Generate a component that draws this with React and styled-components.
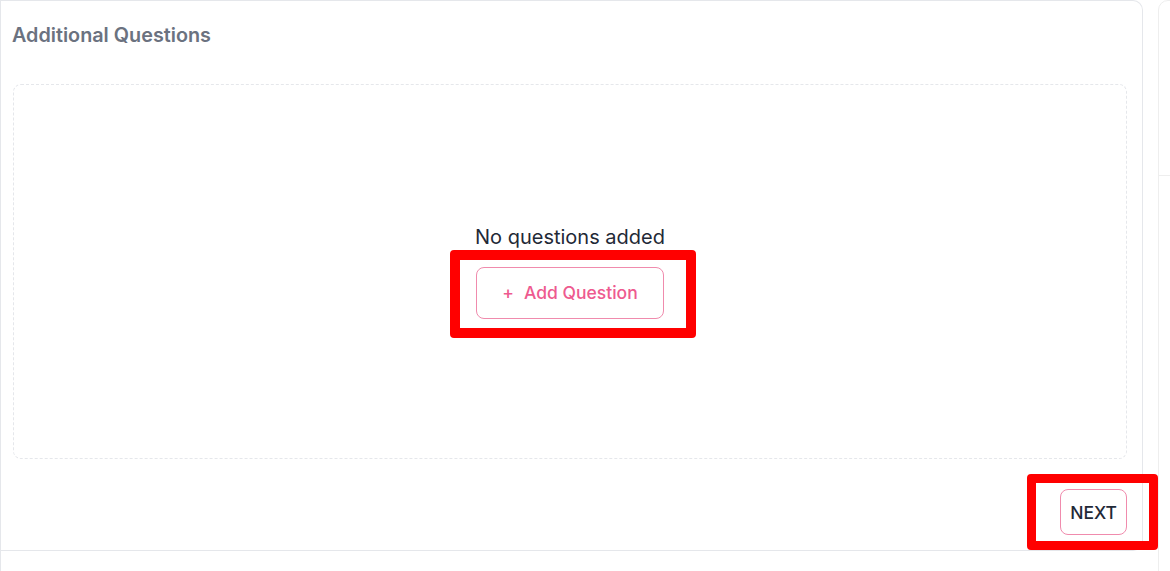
import React from "react";
import styled, { createGlobalStyle } from "styled-components";

const Global = createGlobalStyle`
  html, body { margin: 0; padding: 0; background: #ffffff; }
  body { font-family: Inter, "Noto Sans", "Liberation Sans", sans-serif; overflow: hidden; }
  * { box-sizing: border-box; }
`;

const Page = styled.div`
  display: flex;
  align-items: flex-start;
  gap: 15px;
  width: 1170px;
  height: 571px;
  overflow: hidden;
`;

const MainColumn = styled.div`
  flex: 0 0 1143px;
  height: 571px;
  border-left: 1px solid #e5e7eb;
`;

const Card = styled.section`
  display: flex;
  flex-direction: column;
  height: 551px;
  border: 1px solid #e5e7eb;
  border-left: none;
  border-radius: 0 10px 10px 0;
  padding: 22px 15px 15px 11px;
  background: #fff;
`;

const Title = styled.h2`
  margin: 0;
  font-size: 19.8px;
  line-height: 24px;
  font-weight: 600;
  color: #6b7280;
`;

const EmptyBox = styled.div`
  margin-top: 37px;
  margin-left: 1px;
  height: 375px;
  border: 1px dashed #e5e7eb;
  border-radius: 8px;
  display: flex;
  flex-direction: column;
  align-items: center;
  justify-content: center;
  gap: 18px;
`;

const EmptyText = styled.p`
  margin: 0;
  font-size: 20px;
  line-height: 24px;
  color: #1f2937;
`;

const Highlighted = styled.div`
  position: relative;
  display: inline-flex;
`;

const Marker = styled.span`
  position: absolute;
  top: ${(p) => p.$t}px;
  left: ${(p) => p.$l}px;
  right: ${(p) => p.$r}px;
  bottom: ${(p) => p.$b}px;
  border: ${(p) => p.$w}px solid #ff0000;
  border-radius: 4px;
  pointer-events: none;
`;

const OutlineButton = styled.button`
  display: inline-flex;
  align-items: center;
  justify-content: center;
  gap: 10px;
  height: ${(p) => p.$h}px;
  padding: 0 ${(p) => p.$px}px;
  background: #fff;
  border: 1px solid #f08bad;
  border-radius: 8px;
  font-family: inherit;
  font-size: 17.5px;
  font-weight: 500;
  color: ${(p) => p.$color};
  cursor: pointer;
`;

const Footer = styled.div`
  margin-top: 30px;
  display: flex;
  justify-content: flex-end;
`;

const SideCard = styled.aside`
  flex: 0 0 60px;
  height: 600px;
  border: 1px solid #eeeeee;
  border-radius: 10px 0 0 0;
  display: flex;
  flex-direction: column;
`;

const SideHeader = styled.div`
  height: 175px;
  border-bottom: 1px solid #eeeeee;
`;

export default function App() {
  return (
    <>
      <Global />
      <Page>
        <MainColumn>
          <Card>
            <Title>Additional Questions</Title>
            <EmptyBox>
              <EmptyText>No questions added</EmptyText>
              <Highlighted>
                <Marker $t={-17} $l={-26} $r={-32} $b={-19} $w={10} />
                <OutlineButton $h={52} $px={25} $color="#ee5a8f">
                  <span>+</span>
                  <span>Add Question</span>
                </OutlineButton>
              </Highlighted>
            </EmptyBox>
            <Footer>
              <Highlighted>
                <Marker $t={-15} $l={-33} $r={-31} $b={-15} $w={9} />
                <OutlineButton $h={46} $px={9} $color="#1f2937">
                  NEXT
                </OutlineButton>
              </Highlighted>
            </Footer>
          </Card>
        </MainColumn>
        <SideCard>
          <SideHeader />
        </SideCard>
      </Page>
    </>
  );
}
